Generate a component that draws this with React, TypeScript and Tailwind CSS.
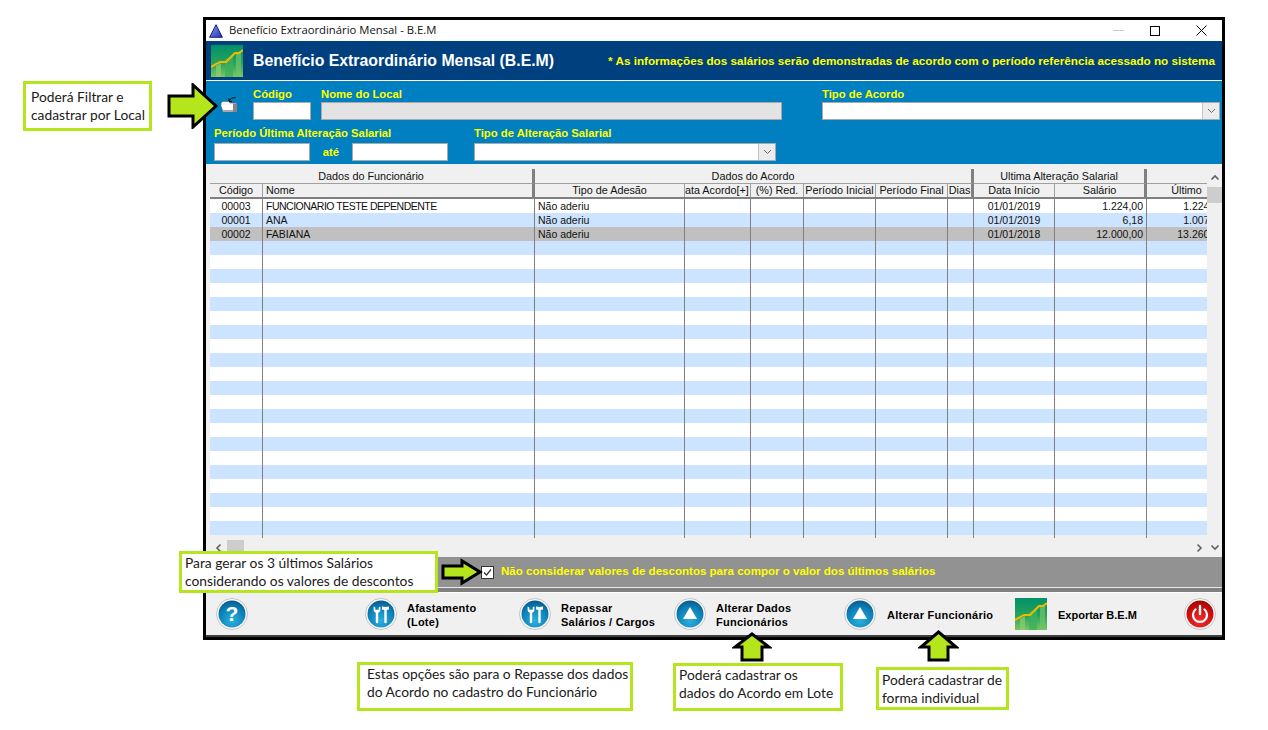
const columns = [
  { label: "Código", className: "text-center" },
  { label: "Nome", className: "text-left pl-[3px]" },
  { label: "Tipo de Adesão", className: "text-center" },
  { label: "Data Acordo[+]", className: "text-center" },
  { label: "(%) Red.", className: "text-center" },
  { label: "Período Inicial", className: "text-center" },
  { label: "Período Final", className: "text-center" },
  { label: "Dias", className: "text-center" },
  { label: "Data Início", className: "text-center" },
  { label: "Salário", className: "text-center" },
  { label: "Último", className: "text-center" },
];

const gridCols =
  "grid-cols-[53px_272px_150px_66px_53px_72px_72px_26px_81px_92px_80px]";

const employees = [
  ["00003", "FUNCIONARIO TESTE DEPENDENTE", "Não aderiu", "", "", "", "", "", "01/01/2019", "1.224,00", "1.224,00"],
  ["00001", "ANA", "Não aderiu", "", "", "", "", "", "01/01/2019", "6,18", "1.007,00"],
  ["00002", "FABIANA", "Não aderiu", "", "", "", "", "", "01/01/2018", "12.000,00", "13.260,00"],
];

const cellAlign = [
  "text-center",
  "text-left pl-[3px]",
  "text-left pl-[3px]",
  "",
  "",
  "",
  "",
  "",
  "text-center",
  "text-right pr-[3px]",
  "text-right pr-[2px]",
];

const emptyRow = ["", "", "", "", "", "", "", "", "", "", ""];
const rows = [...employees, ...Array.from({ length: 22 }, () => emptyRow)];

function rowColor(index: number) {
  if (index === 2) return "bg-[#c0c0c0]";
  if (index === 24) return "bg-[#f0f0f0]";
  return index % 2 === 1 ? "bg-[#cce4ff]" : "bg-white";
}

function Logo({ id, className }: { id: string; className: string }) {
  return (
    <svg viewBox="0 0 32 32" className={className}>
      <defs>
        <linearGradient id={id} x1="0" y1="0" x2="0" y2="1">
          <stop offset="0" stopColor="#00916a" />
          <stop offset="0.55" stopColor="#27a25a" />
          <stop offset="1" stopColor="#7cc464" />
        </linearGradient>
      </defs>
      <rect width="32" height="32" fill={`url(#${id})`} />
      <path d="M5 32V21l5-3v14z" fill="#8fce70" opacity="0.7" />
      <path d="M14 32V14l8-3v21z" fill="#3bb05c" opacity="0.75" />
      <path d="M25 32V9l5-3v26z" fill="#6fc468" opacity="0.7" />
      <path d="M0 22 L9 17 L15 17 L24 8 L28 8 L32 5" fill="none" stroke="#f5b800" strokeWidth="2" />
    </svg>
  );
}

function Sphere({ id, red, children }: { id: string; red?: boolean; children: React.ReactNode }) {
  return (
    <svg viewBox="0 0 32 32" className="h-8 w-8 shrink-0">
      <defs>
        <radialGradient id={id} cx="0.5" cy="0.75" r="0.8">
          <stop offset="0" stopColor={red ? "#f03030" : "#2bb0dc"} />
          <stop offset="0.65" stopColor={red ? "#c80d0d" : "#0a7db5"} />
          <stop offset="1" stopColor={red ? "#8e0505" : "#08527f"} />
        </radialGradient>
      </defs>
      <circle cx="16" cy="16" r="15.5" fill="#fdfdfd" stroke="#c4c4c4" />
      <circle cx="16" cy="16" r="13.5" fill={`url(#${id})`} />
      {children}
    </svg>
  );
}

function ToolsGlyph() {
  return (
    <g fill="#fff">
      <path d="M8.6 8.5v3.2c0 1.5.9 2.6 2.2 3V24a1.2 1.2 0 0 0 2.4 0v-9.3c1.3-.4 2.2-1.5 2.2-3V8.5l-1.7 1v2.2h-3.4V9.5z" />
      <path d="M17 8.6c2.2.5 4.8.5 7 0v2.9c-.8.3-1.5.4-2.3.5V24a1.2 1.2 0 0 1-2.4 0V12c-.8-.1-1.5-.2-2.3-.5z" />
    </g>
  );
}

function Callout({ className, children }: { className: string; children: React.ReactNode }) {
  return (
    <div
      className={`absolute z-20 whitespace-nowrap border-[3px] border-[#b5e61d] bg-white font-['Lato',sans-serif] text-[13.8px] leading-[18px] text-[#1a1a1a] ${className}`}
    >
      {children}
    </div>
  );
}

function Arrow({ className, viewBox, points }: { className: string; viewBox: string; points: string }) {
  return (
    <svg viewBox={viewBox} className={`absolute z-30 ${className}`}>
      <polygon points={points} fill="#b5e61d" stroke="#000" strokeWidth="3" strokeLinejoin="miter" />
    </svg>
  );
}

function Label({ children, className = "" }: { children: React.ReactNode; className?: string }) {
  return <div className={`h-[15px] text-[11.3px] font-bold leading-[14px] text-[#ffff00] ${className}`}>{children}</div>;
}

function TextInput({ className, disabled }: { className: string; disabled?: boolean }) {
  return (
    <div className={`h-[18px] border border-[#a9a9a9] ${disabled ? "bg-[#e3e3e3]" : "bg-white"} ${className}`} />
  );
}

function Combo({ className }: { className: string }) {
  return (
    <div className={`flex h-[18px] justify-end border border-[#a9a9a9] bg-white ${className}`}>
      <div className="flex w-[17px] items-center justify-center border-l border-[#c4c4c4] bg-[#ececec]">
        <svg viewBox="0 0 9 6" className="h-[6px] w-[9px]">
          <path d="M1 1l3.5 3.5L8 1" fill="none" stroke="#666" strokeWidth="1" />
        </svg>
      </div>
    </div>
  );
}

function Chevron({ dir }: { dir: "up" | "down" | "left" | "right" }) {
  const paths = {
    up: "M1.5 6.5L5 3l3.5 3.5",
    down: "M1.5 3.5L5 7l3.5-3.5",
    left: "M6.5 1.5L3 5l3.5 3.5",
    right: "M3.5 1.5L7 5 3.5 8.5",
  };
  return (
    <svg viewBox="0 0 10 10" className="h-[10px] w-[10px]">
      <path d={paths[dir]} fill="none" stroke="#606060" strokeWidth="1.6" />
    </svg>
  );
}

function ActionText({ children, tight }: { children: React.ReactNode; tight?: boolean }) {
  return (
    <div
      className={`whitespace-nowrap text-[11px] font-bold leading-[14px] text-black ${
        tight ? "tracking-normal" : "tracking-[0.25px]"
      }`}
    >
      {children}
    </div>
  );
}

export default function App() {
  return (
    <div className="relative h-[730px] w-[1268px] overflow-hidden bg-white pl-[203px] pt-[17px] font-['Liberation_Sans',Arial,sans-serif]">
      <div className="flex h-[623px] w-[1022px] flex-col border-[3px] border-black bg-[#f0f0f0]">
        {/* title bar */}
        <div className="flex h-[21px] items-center bg-white pl-[3px] pr-[15px]">
          <svg viewBox="0 0 14 14" className="h-[14px] w-[14px]">
            <defs>
              <linearGradient id="app-icon" x1="0" y1="0" x2="1" y2="1">
                <stop offset="0" stopColor="#8aa4f0" />
                <stop offset="1" stopColor="#1c2fc0" />
              </linearGradient>
            </defs>
            <polygon points="7,0.7 13.4,13.3 0.6,13.3" fill="url(#app-icon)" stroke="#101060" strokeWidth="0.9" />
          </svg>
          <span className="ml-[6px] font-['Open_Sans',sans-serif] text-[11.3px] text-[#111]">
            Benefício Extraordinário Mensal - B.E.M
          </span>
          <div className="ml-auto flex items-center">
            <div className="h-px w-[11px] bg-[#c8c8c8]" />
            <div className="ml-[26px] h-[10px] w-[10px] border border-black" />
            <svg viewBox="0 0 11 11" className="ml-[36px] h-[11px] w-[11px]">
              <path d="M.5.5l10 10M10.5.5l-10 10" stroke="#000" strokeWidth="1" />
            </svg>
          </div>
        </div>

        {/* header */}
        <div className="flex h-[40px] items-center border-b border-white bg-[#00407f] pl-[5px] pr-[7px]">
          <Logo id="logo-top" className="h-[32px] w-[32px]" />
          <span className="ml-[10px] text-[15.85px] font-bold text-white">Benefício Extraordinário Mensal (B.E.M)</span>
          <span className="ml-auto text-[11.7px] font-bold text-[#ffff00]">
            * As informações dos salários serão demonstradas de acordo com o período referência acessado no sistema
          </span>
        </div>

        {/* filters */}
        <div className="h-[83px] bg-[#0080c0] pl-[8px] pt-[6px]">
          <div className="flex">
            <svg viewBox="0 0 18 18" className="ml-[6px] mt-[9px] h-[18px] w-[18px]">
              <path d="M9.5 4.5C10.5 2.5 12.5 1.5 15.5 1.8" fill="none" stroke="#000" strokeWidth="1" />
              <path d="M9 2.5v3h3" fill="none" stroke="#000" strokeWidth="1" />
              <path d="M1 8c0-1.5 1-2.5 2.5-2.5h5L10 7h6.5v9H3z" fill="#f6f6f6" stroke="#666" strokeWidth="0.6" />
              <path d="M1 9h12l.5 5H3z" fill="#fff" />
              <path d="M13 7.5h3.5V16H13z" fill="#858585" />
              <path d="M3 14h10v2H3z" fill="#a8a8a8" />
            </svg>
            <div className="ml-[15px] w-[58px]">
              <Label>Código</Label>
              <TextInput className="w-[58px]" />
            </div>
            <div className="ml-[10px] w-[461px]">
              <Label>Nome do Local</Label>
              <TextInput className="w-[461px]" disabled />
            </div>
            <div className="ml-[40px] w-[398px]">
              <Label>Tipo de Acordo</Label>
              <Combo className="w-[398px]" />
            </div>
          </div>
          <div className="mt-[6px] flex">
            <div>
              <Label className="mb-[2px]">Período Última Alteração Salarial</Label>
              <div className="flex items-center">
                <TextInput className="w-[96px]" />
                <span className="w-[42px] text-center text-[11.3px] font-bold text-[#ffff00]">até</span>
                <TextInput className="w-[96px]" />
              </div>
            </div>
            <div className="ml-[26px]">
              <Label className="mb-[2px]">Tipo de Alteração Salarial</Label>
              <Combo className="w-[302px]" />
            </div>
          </div>
        </div>

        {/* grid */}
        <div className="flex h-[393px] bg-[#f0f0f0] pl-[4px] pt-[5px]">
          <div className="w-[997px]">
            <div className="h-[369px] w-[997px] overflow-hidden text-[10.5px] leading-[14px] text-[#111]">
              <div className="w-[1020px]">
                <div className={`grid h-[14px] ${gridCols} text-center text-[10.8px]`}>
                  <div className="col-span-2 border-r-[3px] border-[#808080]">Dados do Funcionário</div>
                  <div className="col-span-6 border-r-[3px] border-[#808080]">Dados do Acordo</div>
                  <div className="col-span-2 border-r-[3px] border-[#808080]">Ultima Alteração Salarial</div>
                  <div />
                </div>
                <div className={`grid h-[16px] ${gridCols} border-b-2 border-[#808080] text-[10.8px] leading-[12px]`}>
                  {columns.map((col, i) => (
                    <div
                      key={col.label}
                      className={`overflow-hidden whitespace-nowrap border-t border-[#a0a0a0] ${col.className} ${
                        i === 1 || i === 7 || i === 9
                          ? "border-r-[3px] border-r-[#808080]"
                          : "border-r border-r-[#a0a0a0]"
                      }`}
                    >
                      {col.label === "Data Acordo[+]" ? (
                        <span className="ml-[-9px] inline-block whitespace-nowrap">{col.label}</span>
                      ) : (
                        col.label
                      )}
                    </div>
                  ))}
                </div>
                {rows.map((row, r) => (
                  <div key={r} className={`grid h-[14px] ${gridCols} ${rowColor(r)}`}>
                    {row.map((value, c) => (
                      <div
                        key={c}
                        className={`h-[14px] border-r border-[#808080] ${cellAlign[c]} ${
                          r === 0 && c === 1 ? "tracking-[-0.5px]" : ""
                        }`}
                      >
                        {value}
                      </div>
                    ))}
                  </div>
                ))}
              </div>
            </div>
            <div className="mt-[1px] flex h-[17px] items-center">
              <div className="flex w-[17px] justify-center">
                <Chevron dir="left" />
              </div>
              <div className="h-[16px] w-[17px] bg-[#cdcdcd]" />
              <div className="ml-auto flex w-[17px] justify-center">
                <Chevron dir="right" />
              </div>
            </div>
          </div>
          <div className="flex w-[15px] flex-col items-center">
            <div className="mt-[4px]">
              <Chevron dir="up" />
            </div>
            <div className="mt-[4px] h-[16px] w-[15px] bg-[#cdcdcd]" />
            <div className="mb-[5px] mt-auto">
              <Chevron dir="down" />
            </div>
          </div>
        </div>

        {/* discount option */}
        <div className="flex h-[30px] items-center bg-[#929292] pl-[275px]">
          <div className="flex h-[13px] w-[13px] items-center justify-center border border-[#333] bg-white">
            <svg viewBox="0 0 11 11" className="h-[11px] w-[11px]">
              <path d="M2 5.5l2.5 2.5L9 2.5" fill="none" stroke="#333" strokeWidth="1.2" />
            </svg>
          </div>
          <span className="ml-[7px] text-[11.55px] font-bold text-[#ffff00]">
            Não considerar valores de descontos para compor o valor dos últimos salários
          </span>
        </div>
        <div className="h-px bg-[#e8e8e8]" />
        <div className="h-[4px] bg-[#808080]" />
        <div className="h-px bg-white" />

        {/* actions */}
        <div className="flex min-h-0 flex-1 items-center border-b-2 border-[#404040] pl-[10px]">
          <Sphere id="s-help">
            <text x="16" y="23" textAnchor="middle" fontSize="21" fontWeight="bold" fill="#fff" fontFamily="Liberation Sans">?</text>
          </Sphere>
          <div className="ml-[117px] flex items-center">
            <Sphere id="s-afast">
              <ToolsGlyph />
            </Sphere>
            <div className="ml-[10px] w-[112px] pt-px">
              <ActionText>Afastamento</ActionText>
              <ActionText>(Lote)</ActionText>
            </div>
          </div>
          <div className="flex items-center">
            <Sphere id="s-repas">
              <ToolsGlyph />
            </Sphere>
            <div className="ml-[10px] w-[113px] pt-px">
              <ActionText>Repassar</ActionText>
              <ActionText>Salários / Cargos</ActionText>
            </div>
          </div>
          <div className="flex items-center">
            <Sphere id="s-alt1">
              <polygon points="16,9 23,21 9,21" fill="#fff" />
            </Sphere>
            <div className="ml-[10px] w-[128px] pt-px">
              <ActionText>Alterar Dados</ActionText>
              <ActionText>Funcionários</ActionText>
            </div>
          </div>
          <div className="flex items-center">
            <Sphere id="s-alt2">
              <polygon points="16,9 23,21 9,21" fill="#fff" />
            </Sphere>
            <div className="ml-[11px] w-[128px] pt-px">
              <ActionText>Alterar Funcionário</ActionText>
            </div>
          </div>
          <div className="flex items-center">
            <Logo id="logo-bottom" className="h-[32px] w-[32px]" />
            <div className="ml-[11px] w-[126px] pt-px">
              <ActionText tight>Exportar B.E.M</ActionText>
            </div>
          </div>
          <Sphere id="s-off" red>
            <path d="M11.5 11.5a7 7 0 1 0 9 0" fill="none" stroke="#fff" strokeWidth="2.2" strokeLinecap="round" />
            <path d="M16 8v8" stroke="#fff" strokeWidth="2.4" strokeLinecap="round" />
          </Sphere>
        </div>
      </div>

      {/* annotations */}
      <Callout className="left-[23px] top-[81px] h-[50px] w-[129px] pl-[5px] pt-[4px]">
        Poderá Filtrar e
        <br />
        cadastrar por Local
      </Callout>
      <Callout className="left-[179px] top-[551px] h-[42px] w-[259px] pl-[3px]">
        Para gerar os 3 últimos Salários
        <br />
        considerando os valores de descontos
      </Callout>
      <Callout className="left-[357px] top-[662px] h-[49px] w-[276px] pl-[7px]">
        Estas opções são para o Repasse dos dados
        <br />
        do Acordo no cadastro do Funcionário
      </Callout>
      <Callout className="left-[673px] top-[663px] h-[48px] w-[170px] pl-[3px]">
        Poderá cadastrar os
        <br />
        dados do Acordo em Lote
      </Callout>
      <Callout className="left-[876px] top-[667px] h-[43px] w-[133px] pl-[3px] pt-[1px]">
        Poderá cadastrar de
        <br />
        forma individual
      </Callout>

      <Arrow
        className="left-[167px] top-[83px] h-[46px] w-[52px]"
        viewBox="0 0 52 46"
        points="2,13 26,13 26,2 49,23 26,44 26,33 2,33"
      />
      <Arrow
        className="left-[440px] top-[558px] h-[28px] w-[43px]"
        viewBox="0 0 43 28"
        points="3,8 22,8 22,3 40,14 22,25 22,20 3,20"
      />
      <Arrow
        className="left-[732px] top-[632px] h-[30px] w-[40px]"
        viewBox="0 0 40 30"
        points="20,2 37,15 30,15 30,28 10,28 10,15 3,15"
      />
      <Arrow
        className="left-[918px] top-[630px] h-[32px] w-[41px]"
        viewBox="0 0 41 32"
        points="20.5,2 38,17 30,17 30,30 11,30 11,17 3,17"
      />
    </div>
  );
}
